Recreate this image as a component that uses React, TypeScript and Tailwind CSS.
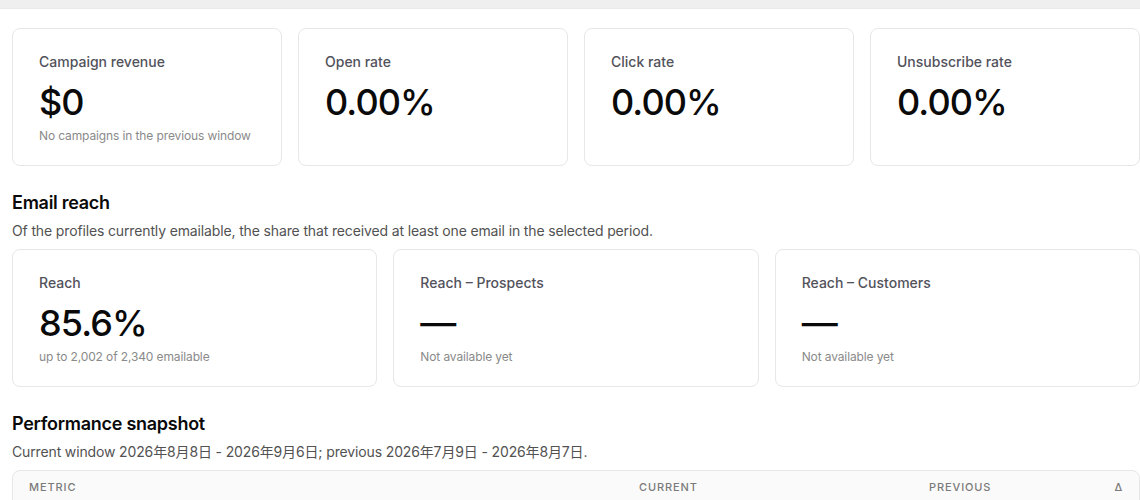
import React from "react";

const font = { fontFamily: 'Inter, "Noto Sans CJK JP", "Noto Sans", sans-serif' };

function Card({ label, value, sub }: { label: string; value: string; sub?: string }) {
  return (
    <div className="rounded-lg border border-[#e7e7e7] bg-white px-[26px] pt-[23px] pb-[21px]">
      <div className="text-sm leading-5 font-medium text-[#52525b]">{label}</div>
      <div className="mt-2.5 text-4xl leading-10 font-medium text-[#0a0a0a] tracking-[-0.025em]">{value}</div>
      {sub ? <div className="mt-1.5 text-xs leading-4 tracking-[-0.01em] text-[#8a8a8a]">{sub}</div> : null}
    </div>
  );
}

export default function App() {
  return (
    <div style={font} className="w-[1140px] h-[500px] overflow-hidden bg-white">
      <div className="h-[9px] bg-[#efefef] border-b border-[#e9e9e9]" />
      <div className="pl-3 pt-[19px]">
        <div className="grid grid-cols-4 gap-4">
          <Card label="Campaign revenue" value="$0" sub="No campaigns in the previous window" />
          <Card label="Open rate" value="0.00%" />
          <Card label="Click rate" value="0.00%" />
          <Card label="Unsubscribe rate" value="0.00%" />
        </div>

        <h2 className="mt-[23px] text-lg leading-7 font-semibold tracking-[-0.015em] text-[#0a0a0a]">Email reach</h2>
        <p className="mt-1 text-sm leading-5 tracking-[-0.01em] text-[#525252]">
          Of the profiles currently emailable, the share that received at least one email in the selected period.
        </p>
        <div className="mt-2 grid grid-cols-3 gap-4">
          <Card label="Reach" value="85.6%" sub="up to 2,002 of 2,340 emailable" />
          <Card label="Reach – Prospects" value="—" sub="Not available yet" />
          <Card label="Reach – Customers" value="—" sub="Not available yet" />
        </div>

        <h2 className="mt-[23px] text-lg leading-7 font-semibold tracking-[-0.015em] text-[#0a0a0a]">Performance snapshot</h2>
        <p className="mt-1 text-sm leading-5 tracking-[-0.01em] text-[#525252]">
          Current window 2026年8月8日 - 2026年9月6日; previous 2026年7月9日 - 2026年8月7日.
        </p>
        <div className="mt-2 rounded-t-lg border border-[#e7e7e7] bg-[#fafafa]">
          <div className="grid grid-cols-[610px_290px_1fr_80px] pt-[8px] pb-2.5 text-[11px] leading-4 font-medium uppercase tracking-[0.08em] text-[#7a7a7a]">
            <div className="pl-4">Metric</div>
            <div className="pl-4">Current</div>
            <div className="pl-4">Previous</div>
            <div className="pr-4 text-right">Δ</div>
          </div>
          <div className="h-10 bg-white border-t border-[#e7e7e7]" />
        </div>
      </div>
    </div>
  );
}
